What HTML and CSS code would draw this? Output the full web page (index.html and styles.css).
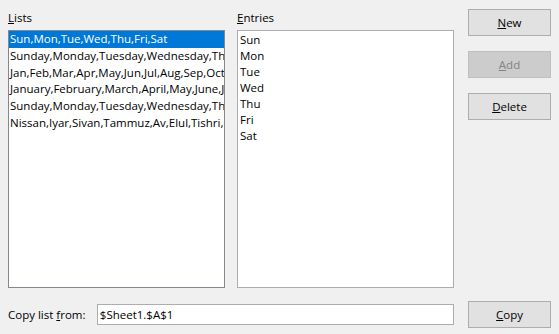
FILE: index.html
```html
<!DOCTYPE html>
<html>
<head>
<meta charset="utf-8">
<link rel="stylesheet" href="styles.css">
</head>
<body>
<div class="dialog">
  <div class="top">
    <div class="col lists-col">
      <div class="label"><u>L</u>ists</div>
      <div class="listbox focused">
        <div class="row selected">Sun,Mon,Tue,Wed,Thu,Fri,Sat</div>
        <div class="row">Sunday,Monday,Tuesday,Wednesday,Thursday,Friday,Saturday</div>
        <div class="row">Jan,Feb,Mar,Apr,May,Jun,Jul,Aug,Sep,Oct,Nov,Dec</div>
        <div class="row">January,February,March,April,May,June,July,August</div>
        <div class="row">Sunday,Monday,Tuesday,Wednesday,Thursday,Friday,Saturday</div>
        <div class="row">Nissan,Iyar,Sivan,Tammuz,Av,Elul,Tishri,Heshvan</div>
      </div>
    </div>
    <div class="col entries-col">
      <div class="label"><u>E</u>ntries</div>
      <div class="listbox entries">
        <div class="entry">Sun</div>
        <div class="entry">Mon</div>
        <div class="entry">Tue</div>
        <div class="entry">Wed</div>
        <div class="entry">Thu</div>
        <div class="entry">Fri</div>
        <div class="entry">Sat</div>
      </div>
    </div>
    <div class="buttons">
      <button class="btn"><u>N</u>ew</button>
      <button class="btn disabled"><u>A</u>dd</button>
      <button class="btn"><u>D</u>elete</button>
    </div>
  </div>
  <div class="bottom">
    <div class="copy-label">Copy list <u>f</u>rom:</div>
    <div class="input">$Sheet1.$A$1</div>
    <button class="btn"><u>C</u>opy</button>
  </div>
</div>
</body>
</html>
```
FILE: styles.css
```css
html, body {
  margin: 0;
  padding: 0;
  background: #f0f0f0;
}
body {
  font-family: "Open Sans", "Noto Sans", sans-serif;
  font-size: 11.5px;
  color: #000;
  width: 559px;
  height: 334px;
  overflow: hidden;
}
.dialog {
  padding: 9px 8px 0 8px;
}
.top {
  display: flex;
  height: 279px;
}
.col {
  width: 217px;
  display: flex;
  flex-direction: column;
}
.entries-col {
  margin-left: 12px;
}
.label {
  height: 21px;
  line-height: 18px;
  padding-left: 0;
}
.listbox {
  box-sizing: border-box;
  height: 258px;
  background: #fff;
  border: 1px solid #828790;
  overflow: hidden;
  white-space: nowrap;
}
.entries {
  border-color: #abadb3;
  padding-top: 1px;
}
.row {
  height: 16.8px;
  line-height: 16px;
  padding-left: 1px;
}
.row.selected {
  background: #0078d7;
  color: #fff;
}
.entry {
  height: 16px;
  line-height: 16px;
  padding-left: 2px;
}
.buttons {
  margin-left: 14px;
  display: flex;
  flex-direction: column;
  gap: 15px;
}
.btn {
  box-sizing: border-box;
  width: 83px;
  height: 27px;
  background: #e1e1e1;
  border: 1px solid #adadad;
  font-family: inherit;
  font-size: 11.5px;
  color: #000;
  padding: 0;
}
.btn.disabled {
  background: #cccccc;
  border-color: #bfbfbf;
  color: #838383;
}
.bottom {
  display: flex;
  align-items: center;
  margin-top: 13px;
}
.copy-label {
  width: 89px;
}
.input {
  box-sizing: border-box;
  width: 358px;
  height: 21px;
  line-height: 19px;
  background: #fff;
  border: 1px solid #abadb3;
  padding-left: 2px;
  margin-right: 14px;
}
```
